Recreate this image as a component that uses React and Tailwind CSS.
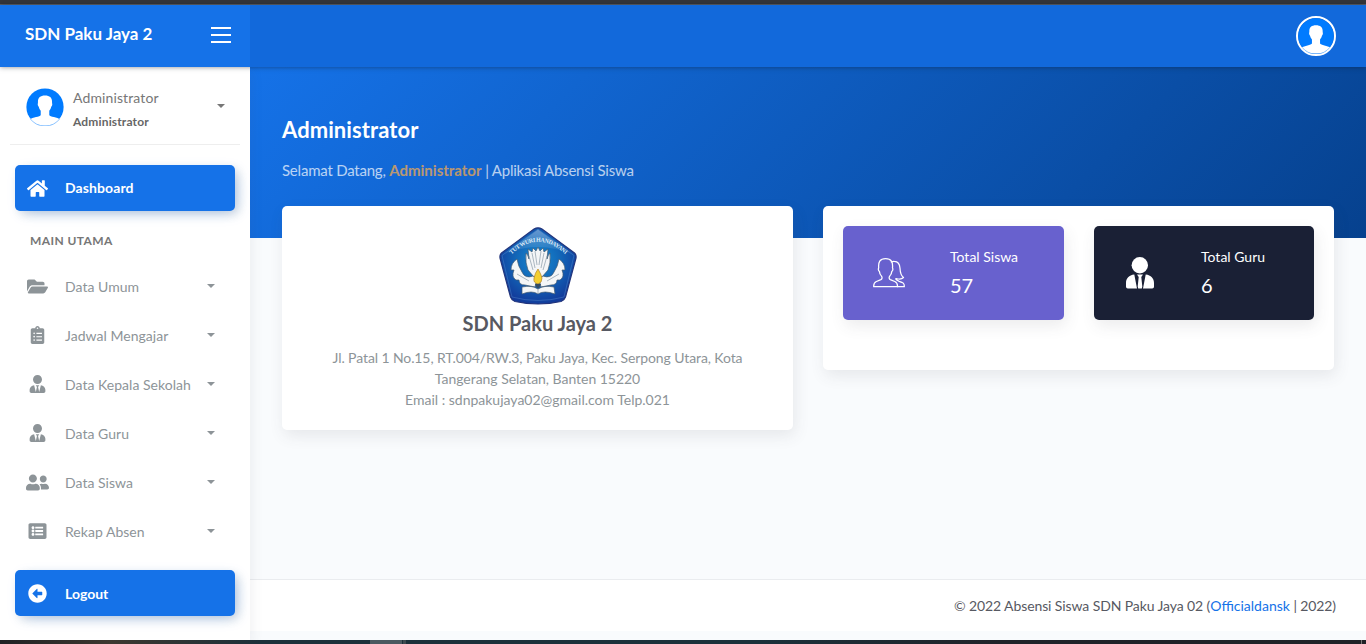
import React from "react";
import {
  FaHome,
  FaFolderOpen,
  FaClipboardList,
  FaUserTie,
  FaUserFriends,
  FaListAlt,
  FaArrowAltCircleLeft,
} from "react-icons/fa";

const menu = [
  { label: "Data Umum", Icon: FaFolderOpen },
  { label: "Jadwal Mengajar", Icon: FaClipboardList },
  { label: "Data Kepala Sekolah", Icon: FaUserTie },
  { label: "Data Guru", Icon: FaUserTie },
  { label: "Data Siswa", Icon: FaUserFriends },
  { label: "Rekap Absen", Icon: FaListAlt },
];

function Avatar({ className }) {
  return (
    <svg viewBox="0 0 40 40" className={className}>
      <circle cx="20" cy="20" r="19.6" fill="#007bff" />
      <path
        d="M20 8c-5.200 0-7.700 2.600-7.400 7.200 0 1-.5 1.500-.1 2.900.2.9.8 1.200 1 1.900.4 1.900 1.300 3 2 3.900v4.400c-.6 2-8.600 2.300-11.600 4.700A20 20 0 0 0 20 39.500a20 20 0 0 0 16.100-6.500c-3-2.400-11-2.700-11.600-4.700v-4.400c.7-.9 1.600-2 2-3.900.2-.7.8-1 1-1.900.4-1.400-.1-1.900-.1-2.900.3-4.600-2.200-7.200-7.400-7.200z"
        fill="#fff"
      />
      <path d="M4.500 32.500a19.500 19.500 0 0 0 31 0" fill="none" stroke="#6bb2ff" strokeWidth="0.8" />
    </svg>
  );
}

function Caret({ className }) {
  return (
    <svg viewBox="0 0 8 4" className={`h-1 w-2 ${className}`}>
      <path d="M0 0h8L4 4z" fill="currentColor" />
    </svg>
  );
}

function UsersOutline() {
  return (
    <svg viewBox="0 0 32 30" className="h-[30px] w-8" fill="none" stroke="#fff" strokeWidth="1.25" strokeLinejoin="round" strokeLinecap="round">
      <path d="M.7 28.700h23.800c.2-3-.4-4.200-2.700-5.200l-4.500-1.900c-1.300-.6-1.500-2.200-.6-3.500 1.500-1.500 2-3 2.100-4.700 1-.8 1.300-2.300.7-3.700.5-5.300-1-9-6.900-9S5.200 4.400 5.700 9.700c-.6 1.400-.3 2.900.7 3.700.1 1.700.6 3.200 2.100 4.700.9 1.300.7 2.900-.6 3.500l-4.500 1.900C1.100 24.500.5 25.700.7 28.700z" />
      <path d="M18.300 3.900c1-.5 2-.7 3-.6 3.800.2 5.500 2.800 5.700 7 .2 4.400 1.300 7.700 3.500 9.200-1.300 1.300-3.300 1.700-5 1.500-1.800-.2-2.700-.7-2.800.1 0 1 1 1.300 3.500 2.200 3.800 1.200 5.300 1.900 5.100 5.400h-6.600" />
    </svg>
  );
}

function TieUser() {
  return (
    <svg viewBox="0 0 28 32" className="h-8 w-7" fill="#fff">
      <circle cx="13.800" cy="8.300" r="8.200" />
      <path d="M8.300 17.600L11 31.500H1.800A1.800 1.800 0 0 1 0 29.700V26c0-4.300 3-7.900 8.300-8.400zM19.700 17.600L17 31.500h9.200a1.800 1.800 0 0 0 1.800-1.800V26c0-4.300-3-7.900-8.300-8.400zM11 17.600h6l-1.700 2.500 1 9.400-.5 2h-3.600l-.5-2 1-9.400z" />
    </svg>
  );
}

function Emblem() {
  return (
    <svg viewBox="0 0 78 78" className="h-[78px] w-[78px]">
      <defs>
        <radialGradient id="field" cx="50%" cy="43%" r="58%">
          <stop offset="0" stopColor="#168bd1" />
          <stop offset=".5" stopColor="#1267b8" />
          <stop offset="1" stopColor="#123b9b" />
        </radialGradient>
        <linearGradient id="shine" x1="0" y1="0" x2="0" y2="1">
          <stop offset="0" stopColor="#bcdaf3" stopOpacity=".5" />
          <stop offset="1" stopColor="#bcdaf3" stopOpacity="0" />
        </linearGradient>
        <path id="motto" d="M12.500 27.500Q39 2 66.500 27.500" />
      </defs>
      <path d="M39 .8Q41 .8 43 2L75.500 26Q77.500 28 77 31L66.500 70Q65.500 73 62 74.500Q39 79.500 16 74.500Q12.500 73 11.500 70L1 31Q.5 28 2.500 26L35 2Q37 .8 39 .8z" fill="url(#field)" stroke="#23357c" strokeWidth="1.200" />
      <path d="M39 2.500L74.500 28Q39 12 3.500 28z" fill="url(#shine)" />
      <path d="M39 2.200L75 28.500L65 70Q39 77 13 70L3 28.500z" fill="none" stroke="#5c91cf" strokeWidth=".4" />
      <text fill="#dcebf8" fontSize="6" fontWeight="700" fontFamily="Liberation Serif, serif">
        <textPath href="#motto" textLength="61">TUT WURI HANDAYANI</textPath>
      </text>
      <g fill="#f4f6f7" stroke="#425a70" strokeWidth=".7" strokeLinejoin="round">
        <path d="M35 50L29 43Q26 36 27 26Q29 28 30 32L29 22L33 25L34 21L37 24L39 20L41 24L44 21L45 25L49 22L48 32Q49 28 51 26Q52 36 49 43L43 50z" />
        <path d="M34 49Q26 52 23 45Q19 39 18 32Q12 36 12 43L15 43Q12 50 17 53L20 53Q20 58 26 58L36 60L38 52z" />
        <path d="M44 49Q52 52 55 45Q59 39 60 32Q66 36 66 43L63 43Q66 50 61 53L58 53Q58 58 52 58L42 60L40 52z" />
        <path d="M23 60Q33 58 39 62Q45 58 55 60L56 67Q45 63 39 67Q33 63 23 67z" />
      </g>
      <path d="M30 29L34 43M33 26L36 41M36 24L38 38M42 24L40 38M45 26L42 41M48 29L44 43M18 47L30 54M60 47L48 54M39 62V66" fill="none" stroke="#8b9ca9" strokeWidth=".7" />
      <path d="M39 42Q42 47 43 51Q43 56 39 57Q34 56 35 51Q36 46 39 42z" fill="#f4cf31" stroke="#b18226" strokeWidth=".7" />
      <path d="M36 57h6l-2 4h-2z" fill="#344b61" />
    </svg>
  );
}

function PrimaryItem({ Icon, label, labelClass }) {
  return (
    <a className="mx-[15px] flex h-[46px] shrink-0 items-center rounded-[5px] bg-[#1572e8] text-white shadow-[4px_4px_10px_0_rgba(0,0,0,0.1),4px_4px_15px_-5px_rgba(21,114,232,0.4)]">
      <span className="ml-[10px] flex w-[25px] justify-center">
        <Icon className="h-[19px] w-[21px]" />
      </span>
      <span className={`ml-[15px] text-[14px] font-bold ${labelClass}`}>{label}</span>
    </a>
  );
}

function StatCard({ icon, label, value, className }) {
  return (
    <div className={`flex h-[94px] rounded-[5px] text-white shadow-[2px_6px_15px_0_rgba(69,65,78,0.1)] ${className}`}>
      <div className="flex w-[92px] items-center justify-center">{icon}</div>
      <div className="ml-[15px] pt-[19px]">
        <p className="text-[14px] leading-[23px]">{label}</p>
        <p className="mt-[3px] text-[20px] leading-7">{value}</p>
      </div>
    </div>
  );
}

function Sidebar() {
  return (
    <aside className="relative z-10 flex w-[250px] shrink-0 flex-col bg-white shadow-[4px_4px_10px_rgba(69,65,78,0.06)]">
      <div className="mx-[10px] flex h-[78px] shrink-0 border-b border-[#eee] pl-4 text-[#777]">
        <Avatar className="mt-[21px] h-[38px] w-[38px]" />
        <div className="ml-[9px] w-[144px] pt-5">
          <p className="text-[14px] leading-[22px] tracking-[0.12px]">Administrator</p>
          <p className="mt-[3px] text-[12px] leading-5 font-bold tracking-[0.15px] text-[#666]">Administrator</p>
        </div>
        <Caret className="mt-[37px]" />
      </div>
      <div className="h-5 shrink-0" />
      <PrimaryItem Icon={FaHome} label="Dashboard" labelClass="pb-[2px] tracking-[0.1px]" />
      <h4 className="mb-[13px] h-10 shrink-0 pt-5 pl-[30px] text-[12px] leading-5 font-bold tracking-[0.42px] text-[#777]">MAIN UTAMA</h4>
      {menu.map(({ label, Icon }) => (
        <a key={label} className="mx-[15px] mb-[3px] flex h-[46px] shrink-0 items-center text-[#8d9498]">
          <span className="ml-[10px] flex w-[25px] justify-center pb-[2px]">
            <Icon className={label === "Data Siswa" ? "h-[19px] w-[23px]" : label === "Data Umum" ? "h-[19px] w-[21px]" : "h-[18px] w-[19px]"} />
          </span>
          <span className="ml-[15px] w-[142px] pb-[2px] text-[14px] tracking-[0.03px]">{label}</span>
          <Caret className="mb-[2px]" />
        </a>
      ))}
      <div className="h-3 shrink-0" />
      <PrimaryItem Icon={FaArrowAltCircleLeft} label="Logout" labelClass="" />
    </aside>
  );
}

export default function App() {
  return (
    <div className="flex h-[644px] w-[1366px] flex-col overflow-hidden bg-[#f9fbfd] font-['Lato',sans-serif] text-[14px]">
      <div className="h-[5px] shrink-0 border-b border-[#5f6368] bg-[#35363a]" />
      <header className="relative z-20 flex h-[62px] shrink-0 shadow-[0_0_5px_rgba(18,23,39,0.5)]">
        <div className="flex w-[250px] items-center justify-between bg-[#1572e8] pr-[19px] pl-[25px]">
          <span className="pb-1 text-[17px] font-bold text-white">SDN Paku Jaya 2</span>
          <div className="flex w-5 flex-col gap-[5px] pb-[2px]">
            <span className="h-[2px] bg-white" />
            <span className="h-[2px] bg-white" />
            <span className="h-[2px] bg-white" />
          </div>
        </div>
        <div className="flex flex-1 items-center justify-end bg-[#1269db] pr-[30px]">
          <div className="h-10 w-10 rounded-full border-2 border-white">
            <Avatar className="h-9 w-9" />
          </div>
        </div>
      </header>

      <div className="flex h-[573px] shrink-0">
        <Sidebar />
        <main className="flex flex-1 flex-col">
          <div className="h-[171px] shrink-0 bg-[linear-gradient(-45deg,#06418e,#1572e8)] pt-12 pl-8">
            <h2 className="text-[22px] leading-[30px] font-bold tracking-[0.08px] text-white">Administrator</h2>
            <h5 className="mt-[13px] text-[15px] leading-6 tracking-[-0.22px] text-white opacity-70">
              Selamat Datang, <b className="tracking-normal text-[#ffad46]">Administrator</b> | Aplikasi Absensi Siswa
            </h5>
          </div>
          <div className="-mt-8 flex items-start gap-[30px] px-8">
            <section className="flex h-[224px] w-[511px] flex-col items-center rounded-[5px] bg-white pt-[21px] text-center shadow-[2px_6px_15px_0_rgba(69,65,78,0.1)]">
              <Emblem />
              <h3 className="mt-[3px] text-[20px] leading-[30px] font-bold text-[#575962]">SDN Paku Jaya 2</h3>
              <p className="mt-[9px] w-[430px] leading-[21px] tracking-[-0.1px] text-[#8d9498]">
                Jl. Patal 1 No.15, RT.004/RW.3, Paku Jaya, Kec. Serpong Utara, Kota
                <br />
                <span className="tracking-[-0.03px]">Tangerang Selatan, Banten 15220</span>
                <br />
                <span className="tracking-normal">Email : sdnpakujaya02@gmail.com Telp.021</span>
              </p>
            </section>
            <section className="flex h-[164px] w-[511px] gap-[30px] rounded-[5px] bg-white p-5 shadow-[2px_6px_15px_0_rgba(69,65,78,0.1)]">
              <StatCard className="w-[221px] bg-[#6861ce]" icon={<UsersOutline />} label="Total Siswa" value="57" />
              <StatCard className="w-[220px] bg-[#1a2035]" icon={<TieUser />} label="Total Guru" value="6" />
            </section>
          </div>
          <footer className="mt-auto mb-[9px] flex h-[52px] shrink-0 items-center justify-end border-t border-[#eaecef] bg-white pr-[30px] text-[#575962]">
            <p className="tracking-[-0.1px]">
              © 2022 Absensi Siswa SDN Paku Jaya 02 (<a className="tracking-normal text-[#1572e8]">Officialdansk</a> | 2022)
            </p>
          </footer>
        </main>
      </div>

      <div className="relative z-20 flex h-1 shrink-0 bg-[linear-gradient(90deg,#202124_0,#3d3830_110px,#1c303a_260px,#1b303a_760px,#202329_1000px,#202227_100%)]">
        <span className="ml-[370px] h-1 w-8 bg-[#4b5960]" />
        <span className="ml-px h-1 w-[3px] bg-[#3d4a50]" />
        <span className="mr-1 ml-auto h-1 w-px bg-[#777]" />
      </div>
    </div>
  );
}
